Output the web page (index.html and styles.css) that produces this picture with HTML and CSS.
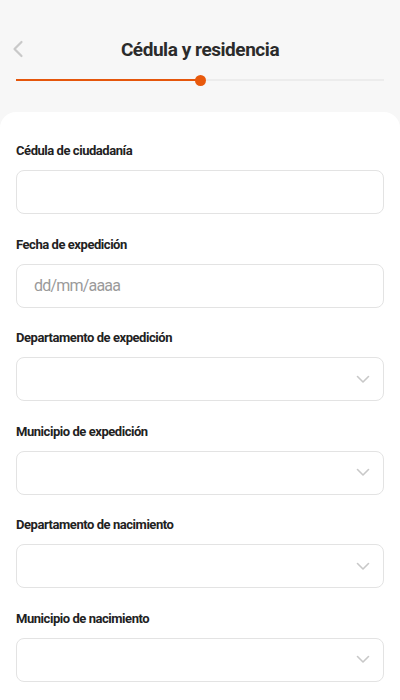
FILE: index.html
```html
<!DOCTYPE html>
<html lang="es">
<head>
<meta charset="utf-8">
<title>Cédula y residencia</title>
<link rel="stylesheet" href="styles.css">
</head>
<body>
<div class="screen">
  <header class="header">
    <div class="topbar">
      <span class="back">
        <svg width="12" height="18" viewBox="0 0 12 18"><path d="M9.5 2 L2.5 9 L9.5 16" fill="none" stroke="#c9c9c9" stroke-width="2.2" stroke-linecap="round" stroke-linejoin="round"/></svg>
      </span>
      <h1 class="title">Cédula y residencia</h1>
    </div>
    <div class="progress">
      <div class="progress-fill"></div>
      <div class="progress-dot"></div>
    </div>
  </header>
  <main class="card">
    <div class="field">
      <label class="label">Cédula de ciudadanía</label>
      <div class="input"></div>
    </div>
    <div class="field">
      <label class="label">Fecha de expedición</label>
      <div class="input"><span class="placeholder">dd/mm/aaaa</span></div>
    </div>
    <div class="field">
      <label class="label">Departamento de expedición</label>
      <div class="input select"><svg class="caret" width="14" height="9" viewBox="0 0 14 9"><path d="M1.5 1.5 L7 7 L12.5 1.5" fill="none" stroke="#c8c8c8" stroke-width="1.6" stroke-linecap="round" stroke-linejoin="round"/></svg></div>
    </div>
    <div class="field">
      <label class="label">Municipio de expedición</label>
      <div class="input select"><svg class="caret" width="14" height="9" viewBox="0 0 14 9"><path d="M1.5 1.5 L7 7 L12.5 1.5" fill="none" stroke="#c8c8c8" stroke-width="1.6" stroke-linecap="round" stroke-linejoin="round"/></svg></div>
    </div>
    <div class="field">
      <label class="label">Departamento de nacimiento</label>
      <div class="input select"><svg class="caret" width="14" height="9" viewBox="0 0 14 9"><path d="M1.5 1.5 L7 7 L12.5 1.5" fill="none" stroke="#c8c8c8" stroke-width="1.6" stroke-linecap="round" stroke-linejoin="round"/></svg></div>
    </div>
    <div class="field">
      <label class="label">Municipio de nacimiento</label>
      <div class="input select"><svg class="caret" width="14" height="9" viewBox="0 0 14 9"><path d="M1.5 1.5 L7 7 L12.5 1.5" fill="none" stroke="#c8c8c8" stroke-width="1.6" stroke-linecap="round" stroke-linejoin="round"/></svg></div>
    </div>
  </main>
</div>
</body>
</html>
```
FILE: styles.css
```css
* { box-sizing: border-box; }
html, body { margin: 0; padding: 0; }
body {
  font-family: Roboto, "Liberation Sans", sans-serif;
  background: #f7f7f7;
  color: #222;
  width: 400px;
  height: 700px;
  overflow: hidden;
}
.screen { display: flex; flex-direction: column; }
.header { padding: 30px 16px 0; }
.topbar {
  position: relative;
  height: 38px;
  display: flex;
  align-items: center;
  justify-content: center;
}
.back {
  position: absolute;
  left: -4px;
  top: 10px;
  display: flex;
}
.title {
  margin: 0;
  font-size: 19px;
  font-weight: 700;
  color: #2b2b2b;
  letter-spacing: -0.45px;
}
.progress {
  position: relative;
  margin-top: 11px;
  height: 2px;
  background: #ececec;
}
.progress-fill {
  width: 50%;
  height: 2px;
  background: #e5560b;
}
.progress-dot {
  position: absolute;
  left: calc(50% - 5px);
  top: -4px;
  width: 11px;
  height: 11px;
  border-radius: 50%;
  background: #e8590c;
}
.card {
  margin-top: 31px;
  background: #fff;
  border-radius: 16px 16px 0 0;
  padding: 31px 16px 20px;
  display: flex;
  flex-direction: column;
  gap: 22.5px;
  flex: 1;
  min-height: 600px;
}
.field { display: flex; flex-direction: column; }
.label {
  font-size: 13px;
  font-weight: 700;
  color: #222;
  line-height: 16px;
  margin-bottom: 11px;
  letter-spacing: -0.45px;
}
.input {
  height: 44px;
  border: 1px solid #e3e3e3;
  border-radius: 8px;
  background: #fff;
  display: flex;
  align-items: center;
  padding: 0 17px;
}
.select { justify-content: flex-end; padding-right: 13px; }
.placeholder {
  font-size: 16px;
  color: #9a9a9a;
  letter-spacing: -0.8px;
}
.caret { display: block; }
```
